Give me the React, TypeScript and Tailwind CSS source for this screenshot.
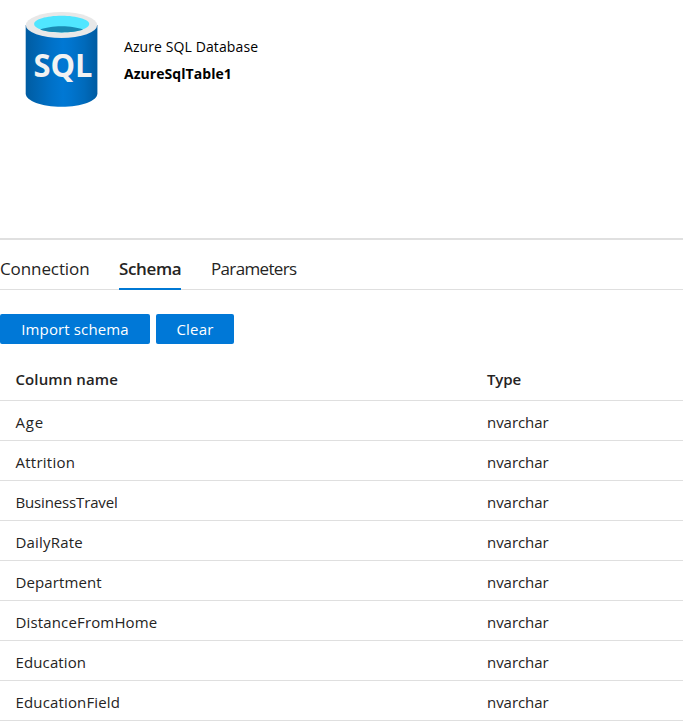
const columns = [
  { name: 'Age', type: 'nvarchar', tracking: 'tracking-[0.8px]' },
  { name: 'Attrition', type: 'nvarchar', tracking: 'tracking-[0.25px]' },
  { name: 'BusinessTravel', type: 'nvarchar', tracking: 'tracking-[-0.15px]' },
  { name: 'DailyRate', type: 'nvarchar', tracking: 'tracking-[0.2px]' },
  { name: 'Department', type: 'nvarchar', tracking: 'tracking-[0.1px]' },
  { name: 'DistanceFromHome', type: 'nvarchar', tracking: 'tracking-[0.15px]' },
  { name: 'Education', type: 'nvarchar', tracking: 'tracking-[0.12px]' },
  { name: 'EducationField', type: 'nvarchar', tracking: 'tracking-[0.15px]' },
];

function SqlIcon() {
  return (
    <svg className="h-[120px] w-[124px] shrink-0" viewBox="0 0 124 120">
      <defs>
        <linearGradient id="body" x1="0" x2="1" y1="0" y2="0">
          <stop offset="0" stopColor="#005ba1" />
          <stop offset="0.07" stopColor="#0060a9" />
          <stop offset="0.36" stopColor="#0071c8" />
          <stop offset="0.52" stopColor="#0078d4" />
          <stop offset="0.64" stopColor="#0074cd" />
          <stop offset="0.82" stopColor="#006abb" />
          <stop offset="1" stopColor="#005ba1" />
        </linearGradient>
      </defs>
      <path d="M25.7 25v68.5c0 7.300 16 13.300 35.900 13.300s35.800-6 35.800-13.300V25z" fill="url(#body)" />
      <ellipse cx="61.500" cy="25.100" rx="35.700" ry="13" fill="#e8e8e8" />
      <path d="M89.200 24c0 4.600-12.300 8.400-27.600 8.400S34.100 28.600 34.100 24s12.200-8.200 27.500-8.200S89.200 19.500 89.200 24z" fill="#50e6ff" />
      <path d="M61.600 26.200c-8.600 0-16.300 1.400-21.500 3.300 5 1.900 12.800 2.900 21.500 2.900s16.500-1 21.500-2.900c-5.200-1.900-12.900-3.300-21.500-3.300z" fill="#198ab3" />
      <text x="33.500" y="77" textLength="59" lengthAdjust="spacingAndGlyphs" fontFamily="Open Sans, sans-serif" fontSize="32" fontWeight="700" fill="#f2f2f2">SQL</text>
    </svg>
  );
}

export default function App() {
  return (
    <div className="h-[723px] w-full overflow-hidden bg-white font-['Open_Sans','Noto_Sans',sans-serif] text-[#252423]">
      <header className="flex h-[238px] items-start">
        <SqlIcon />
        <div className="pt-[33px] text-black">
          <div className="text-[14px] leading-[27px]"><span className="tracking-[0.1px]">Azure SQL Database</span></div>
          <div className="text-[14px] leading-[27px] font-bold"><span className="tracking-[0.05px]">AzureSqlTable1</span></div>
        </div>
      </header>
      <nav className="flex h-[52px] gap-[30px] border-t-2 border-b border-t-[#e0e0e0] border-b-[#dfdfdf] text-[17px] leading-[58px]">
        <div className="w-[89px] whitespace-nowrap"><span className="tracking-[-0.1px]">Connection</span></div>
        <div className="h-[50px] w-[62px] border-b-2 border-[#0078d4] font-semibold whitespace-nowrap"><span className="tracking-[-0.35px]">Schema</span></div>
        <div className="whitespace-nowrap"><span className="tracking-[-0.65px]">Parameters</span></div>
      </nav>
      <div className="flex gap-1.5 pt-6 text-[15px] leading-[30px] text-white">
        <button className="h-[30px] w-[150px] rounded-[2px] bg-[#0078d7]"><span className="tracking-[0.13px]">Import schema</span></button>
        <button className="h-[30px] w-[78px] rounded-[2px] bg-[#0078d7]"><span className="tracking-[0.2px]">Clear</span></button>
      </div>
      <div className="mt-[17px] text-[15px]">
        <div className="flex h-10 border-b border-[#dfdfdf] pl-[15.500px] leading-[37px] font-semibold">
          <div className="w-[471.500px]"><span className="tracking-[0.1px]">Column name</span></div>
          <div><span className="tracking-[-0.1px]">Type</span></div>
        </div>
        {columns.map((column) => (
          <div key={column.name} className="flex h-10 border-b border-[#dfdfdf] pl-[15.500px] leading-[43px]">
            <div className="w-[471.500px]"><span className={column.tracking}>{column.name}</span></div>
            <div><span className="tracking-[-0.05px]">{column.type}</span></div>
          </div>
        ))}
      </div>
    </div>
  );
}
